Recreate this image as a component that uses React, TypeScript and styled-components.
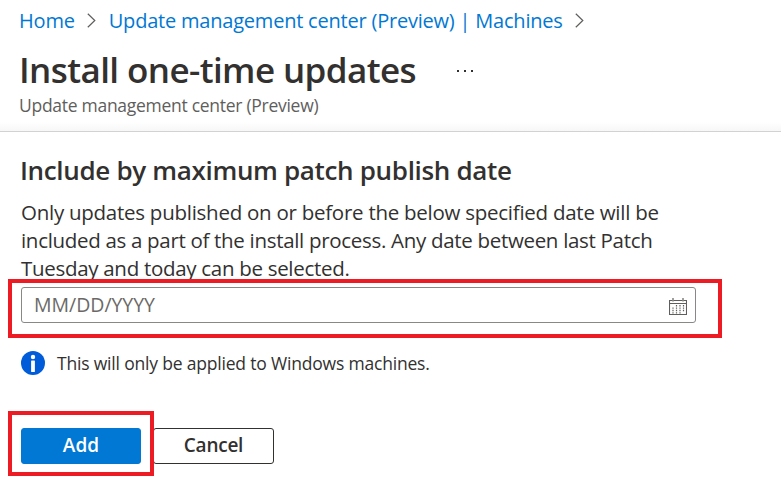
import React from "react";
import styled, { createGlobalStyle } from "styled-components";

const GlobalStyle = createGlobalStyle`
  *, *::before, *::after { box-sizing: border-box; }
  body {
    margin: 0;
    background: #fff;
    color: #323130;
    font-family: "Open Sans", "Noto Sans", sans-serif;
    overflow: hidden;
  }
`;

const Page = styled.div`
  width: 781px;
  height: 484px;
  background: #fff;
  white-space: nowrap;
`;

const Header = styled.header`
  height: 132px;
  padding: 6px 0 0 19px;
  border-bottom: 1px solid #d2d2d2;
  background: linear-gradient(#fff 122px, #f7f7f7 131px);
`;

const Breadcrumb = styled.nav`
  display: flex;
  align-items: center;
  height: 28px;
`;

const Crumb = styled.a<{ $tracking: number }>`
  padding-top: 1px;
  color: #0078d4;
  font-size: 20px;
  line-height: 28px;
  letter-spacing: ${(p) => p.$tracking}px;
  text-decoration: none;
`;

const Chevron = styled.svg`
  flex: none;
  width: 10px;
  height: 16px;
  margin: 0 12px;
`;

const TitleRow = styled.div`
  display: flex;
  align-items: center;
  height: 48px;
  margin-top: 12px;
`;

const Title = styled.h1`
  width: 437px;
  margin: 0;
  font-size: 35px;
  font-weight: 600;
  line-height: 48px;
  letter-spacing: -0.59px;
`;

const MoreDots = styled.svg`
  width: 18px;
  height: 4px;
  margin-top: 2px;
`;

const Subtitle = styled.div`
  margin-top: -1px;
  color: #605e5c;
  font-size: 17.5px;
  line-height: 24px;
  letter-spacing: -0.28px;
`;

const Content = styled.main`
  padding: 20px 0 0 21px;
`;

const SectionTitle = styled.h2`
  height: 36px;
  margin: 0 0 10px -1px;
  font-size: 26px;
  font-weight: 600;
  line-height: 36px;
  letter-spacing: -0.33px;
`;

const Description = styled.p`
  margin: 0;
  font-size: 20.5px;
  line-height: 28px;
`;

const Line = styled.span<{ $tracking: number }>`
  display: block;
  letter-spacing: ${(p) => p.$tracking}px;
`;

const Marked = styled.div<{ $top: number; $right: number; $bottom: number; $left: number }>`
  position: relative;
  width: fit-content;

  &::after {
    content: "";
    position: absolute;
    top: -${(p) => p.$top}px;
    right: -${(p) => p.$right}px;
    bottom: -${(p) => p.$bottom}px;
    left: -${(p) => p.$left}px;
    border: 4px solid #ed1c24;
    pointer-events: none;
  }
`;

const DateField = styled.div`
  display: flex;
  align-items: center;
  justify-content: space-between;
  width: 675px;
  height: 36px;
  margin-top: 5px;
  padding: 0 8px 0 12px;
  border: 1px solid #8a8886;
  border-radius: 3px;
`;

const DateInput = styled.input`
  width: 300px;
  padding: 0;
  border: 0;
  outline: 0;
  background: none;
  font: 19.5px/28px "Open Sans", "Noto Sans", sans-serif;
  letter-spacing: -0.03px;

  &::placeholder { color: #6b6967; opacity: 1; }
`;

const CalendarIcon = styled.svg`
  width: 18px;
  height: 18px;
  margin-top: 3px;
`;

const Notice = styled.div`
  display: flex;
  align-items: center;
  gap: 12px;
  height: 24px;
  margin-top: 28px;
`;

const InfoIcon = styled.svg`
  width: 24px;
  height: 24px;
`;

const NoticeText = styled.span`
  font-size: 17.5px;
  line-height: 24px;
  letter-spacing: -0.19px;
`;

const Actions = styled.div`
  display: flex;
  gap: 12px;
  margin-top: 53px;
`;

const Button = styled.button<{ $primary?: boolean }>`
  display: block;
  width: ${(p) => (p.$primary ? 120 : 121)}px;
  height: 36px;
  padding: 0 0 2px;
  border: 1px solid ${(p) => (p.$primary ? "#0078d4" : "#323130")};
  border-radius: 3px;
  background: ${(p) => (p.$primary ? "#0078d4" : "#fff")};
  color: ${(p) => (p.$primary ? "#fff" : "#323130")};
  font: 600 19px/32px "Open Sans", "Noto Sans", sans-serif;
  letter-spacing: ${(p) => (p.$primary ? 0.1 : -0.25)}px;
`;

const Separator = () => (
  <Chevron viewBox="0 0 10 16" fill="none" stroke="#605e5c" strokeWidth="1.2">
    <path d="M.8 1.7 7.8 8.5.8 15.3" />
  </Chevron>
);

export default function App() {
  return (
    <Page>
      <GlobalStyle />
      <Header>
        <Breadcrumb>
          <Crumb $tracking={-0.2}>Home</Crumb>
          <Separator />
          <Crumb $tracking={-0.21}>Update management center (Preview) | Machines</Crumb>
          <Separator />
        </Breadcrumb>
        <TitleRow>
          <Title>Install one-time updates</Title>
          <MoreDots viewBox="0 0 18 4" fill="#323130">
            <rect x="1" y="1" width="2" height="2" />
            <rect x="8" y="1" width="2" height="2" />
            <rect x="15" y="1" width="2" height="2" />
          </MoreDots>
        </TitleRow>
        <Subtitle>Update management center (Preview)</Subtitle>
      </Header>
      <Content>
        <SectionTitle>Include by maximum patch publish date</SectionTitle>
        <Description>
          <Line $tracking={-0.26}>Only updates published on or before the below specified date will be</Line>
          <Line $tracking={-0.31}>included as a part of the install process. Any date between last Patch</Line>
          <Line $tracking={-0.3}>Tuesday and today can be selected.</Line>
        </Description>
        <Marked $top={8} $right={26} $bottom={15} $left={13}>
          <DateField>
            <DateInput placeholder="MM/DD/YYYY" />
            <CalendarIcon viewBox="0 0 18 18" fill="none" stroke="#605e5c">
              <path d="M.5 2.5h17v14H.5zM.5 5.5h17" strokeWidth="1.1" />
              <path d="M4 0v3.6M14 0v3.6" stroke="#8a8886" strokeWidth="1.6" />
              <path d="M7.5 7v8.6M11 7v8.6M14.5 7v6.2M4 9.4v6.2" strokeWidth="1.2" strokeDasharray="1.4 1" />
            </CalendarIcon>
          </DateField>
        </Marked>
        <Notice>
          <InfoIcon viewBox="0 0 24 24">
            <circle cx="12" cy="12" r="12" fill="#015cda" />
            <circle cx="12" cy="6" r="2.2" fill="#fff" />
            <rect x="10.1" y="9.5" width="3.8" height="11.5" rx=".4" fill="#fff" />
          </InfoIcon>
          <NoticeText>This will only be applied to Windows machines.</NoticeText>
        </Notice>
        <Actions>
          <Marked $top={17} $right={13} $bottom={12} $left={13}>
            <Button $primary>Add</Button>
          </Marked>
          <Button>Cancel</Button>
        </Actions>
      </Content>
    </Page>
  );
}
